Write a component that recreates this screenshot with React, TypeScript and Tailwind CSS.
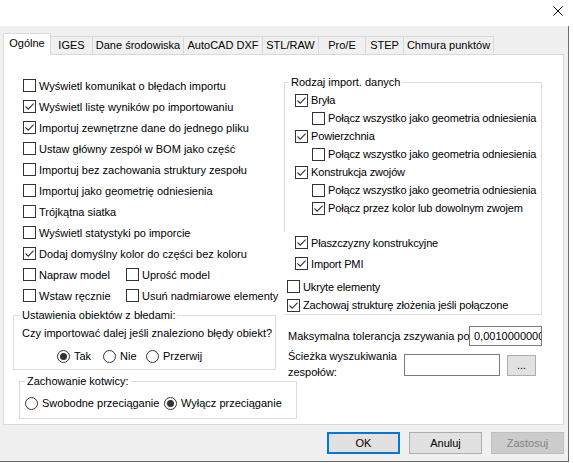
import React from "react";

const Check = ({ checked }: { checked?: boolean }) => (
  <svg width="13" height="13" viewBox="0 0 13 13" className="shrink-0">
    <rect x="0.5" y="0.5" width="12" height="12" fill="#fff" stroke="#333333" />
    {checked && (
      <path d="M2.5 6.5 L5.2 9.2 L10.6 3.6" fill="none" stroke="#333333" strokeWidth="1.1" />
    )}
  </svg>
);

const Radio = ({ checked }: { checked?: boolean }) => (
  <svg width="13" height="13" viewBox="0 0 13 13" className="shrink-0">
    <circle cx="6.5" cy="6.5" r="6" fill="#fff" stroke="#333333" />
    {checked && <circle cx="6.5" cy="6.5" r="3.5" fill="#333333" />}
  </svg>
);

const CheckItem = ({ label, checked, className = "" }: { label: string; checked?: boolean; className?: string }) => (
  <div className={"flex items-center gap-[3px] whitespace-nowrap " + className}>
    <Check checked={checked} />
    <span>{label}</span>
  </div>
);

const RadioItem = ({ label, checked, className = "" }: { label: string; checked?: boolean; className?: string }) => (
  <div className={"flex items-center gap-[4px] whitespace-nowrap " + className}>
    <Radio checked={checked} />
    <span>{label}</span>
  </div>
);

const tabs = [
  { label: "IGES", w: "w-[43px]" },
  { label: "Dane środowiska", w: "w-[92px]" },
  { label: "AutoCAD DXF", w: "w-[80px]" },
  { label: "STL/RAW", w: "w-[57px]" },
  { label: "Pro/E", w: "w-[48px]" },
  { label: "STEP", w: "w-[39px]" },
  { label: "Chmura punktów", w: "w-[91px]" },
];

export default function App() {
  return (
    <div className="w-[573px] h-[463px] bg-white overflow-hidden text-[11px] leading-[16px] text-black font-['Liberation_Sans',Arial,sans-serif]">
      {/* title bar */}
      <div className="h-[26px] bg-white flex justify-end items-start">
        <svg width="10" height="10" viewBox="0 0 10 10" className="mt-[6px] mr-[10px]">
          <path d="M0.5 0.5 L9.5 9.5 M9.5 0.5 L0.5 9.5" stroke="#000" strokeWidth="1" />
        </svg>
      </div>

      {/* body */}
      <div className="w-[569px] h-[436px] bg-[#f0f0f0] border-r border-b border-[#6d6d6d] pt-[7px]">
        {/* tabs */}
        <div className="flex items-end h-[21px] pl-[3px]">
          <div className="relative z-10 -mb-px h-[22px] w-[48px] bg-white border border-b-0 border-[#d9d9d9] flex items-center justify-center pb-[3px]">
            Ogólne
          </div>
          {tabs.map((t) => (
            <div
              key={t.label}
              className={"-ml-px h-[18px] bg-[#f0f0f0] border border-b-0 border-[#d9d9d9] flex items-center justify-center pb-[1px] whitespace-nowrap " + t.w}
            >
              {t.label}
            </div>
          ))}
        </div>

        {/* panel */}
        <div className="ml-[3px] w-[561px] h-[371px] bg-white border border-[#d9d9d9] flex">
          {/* left column */}
          <div className="w-[280px] shrink-0 pt-[20px]">
            <div className="pl-[19px]">
              <CheckItem className="h-[21px]" label="Wyświetl komunikat o błędach importu" />
              <CheckItem className="h-[21px]" label="Wyświetl listę wyników po importowaniu" checked />
              <CheckItem className="h-[21px]" label="Importuj zewnętrzne dane do jednego pliku" checked />
              <CheckItem className="h-[21px]" label="Ustaw główny zespół w BOM jako część" />
              <CheckItem className="h-[21px]" label="Importuj bez zachowania struktury zespołu" />
              <CheckItem className="h-[21px]" label="Importuj jako geometrię odniesienia" />
              <CheckItem className="h-[21px]" label="Trójkątna siatka" />
              <CheckItem className="h-[21px]" label="Wyświetl statystyki po imporcie" />
              <CheckItem className="h-[21px]" label="Dodaj domyślny kolor do części bez koloru" checked />
              <div className="flex h-[21px]">
                <CheckItem className="w-[103px]" label="Napraw model" />
                <CheckItem label="Uprość model" />
              </div>
              <div className="flex h-[21px]">
                <CheckItem className="w-[103px]" label="Wstaw ręcznie" />
                <CheckItem label="Usuń nadmiarowe elementy" />
              </div>
            </div>

            <fieldset className="ml-[9px] mt-[2px] w-[263px] border border-[#dcdcdc] pb-[5px]">
              <legend className="ml-[6px] px-[2px] leading-[14px]">Ustawienia obiektów z błedami:</legend>
              <div className="mt-[3px] h-[16px] pl-[8px] flex items-center whitespace-nowrap">
                Czy importować dalej jeśli znaleziono błędy obiekt?
              </div>
              <div className="mt-[7px] h-[16px] pl-[43px] flex">
                <RadioItem className="w-[46px]" label="Tak" checked />
                <RadioItem className="w-[43px]" label="Nie" />
                <RadioItem label="Przerwij" />
              </div>
            </fieldset>

            <fieldset className="ml-[15px] mt-[4px] w-[278px] border border-[#dcdcdc] pb-[7px]">
              <legend className="ml-[5px] px-[2px] leading-[14px]">Zachowanie kotwicy:</legend>
              <div className="mt-[7px] h-[16px] pl-[5px] flex">
                <RadioItem className="w-[139px]" label="Swobodne przeciąganie" />
                <RadioItem label="Wyłącz przeciąganie" checked />
              </div>
            </fieldset>
          </div>

          {/* right column */}
          <div className="flex-1 pt-[20px]">
            <fieldset className="w-[258px] border border-[#dcdcdc] tracking-[-0.15px]">
              <legend className="ml-[4px] px-[2px] leading-[14px] tracking-normal">Rodzaj import. danych</legend>
              <div className="pt-[2px]">
                <CheckItem className="h-[18px] pl-[10px]" label="Bryła" checked />
                <CheckItem className="h-[18px] pl-[27px]" label="Połącz wszystko jako geometria odniesienia" />
                <CheckItem className="h-[18px] pl-[10px]" label="Powierzchnia" checked />
                <CheckItem className="h-[18px] pl-[27px]" label="Połącz wszystko jako geometria odniesienia" />
                <CheckItem className="h-[18px] pl-[10px]" label="Konstrukcja zwojów" checked />
                <CheckItem className="h-[18px] pl-[27px]" label="Połącz wszystko jako geometria odniesienia" />
                <CheckItem className="h-[18px] pl-[27px]" label="Połącz przez kolor lub dowolnym zwojem" checked />
                <div className="mt-[15px] -ml-px bg-white">
                  <CheckItem className="h-[21px] pl-[11px]" label="Płaszczyzny konstrukcyjne" checked />
                  <CheckItem className="h-[21px] pl-[11px]" label="Import PMI" checked />
                  <CheckItem className="mt-[3px] h-[19px] pl-[3px]" label="Ukryte elementy" />
                  <CheckItem className="h-[18px] pl-[3px]" label="Zachowaj strukturę złożenia jeśli połączone" checked />
                </div>
              </div>
            </fieldset>

            <div className="mt-[11px] h-[20px] pl-[4px] flex items-center">
              <div className="w-[181px] overflow-hidden whitespace-nowrap">Maksymalna tolerancja zszywania powierzchni</div>
              <div className="w-[73px] h-[20px] border border-[#7a7a7a] bg-white pl-[4px] overflow-hidden whitespace-nowrap flex items-center">
                0,00100000000
              </div>
            </div>

            <div className="mt-[2px] pl-[4px] flex items-start">
              <div className="w-[116px] leading-[16px]">
                Ścieżka wyszukiwania
                <br />
                zespołów:
              </div>
              <div className="mt-[6px] w-[96px] h-[22px] border border-[#7a7a7a] bg-white" />
              <div className="mt-[7px] ml-[7px] w-[29px] h-[21px] border border-[#adadad] bg-[#e1e1e1] flex items-center justify-center pb-[2px]">
                ...
              </div>
            </div>
          </div>
        </div>

        {/* buttons */}
        <div className="mt-[7px] pr-[4px] flex justify-end gap-[9px]">
          <div className="w-[73px] h-[22px] border-2 border-[#0078d7] bg-[#e1e1e1] flex items-center justify-center">OK</div>
          <div className="w-[73px] h-[22px] border border-[#adadad] bg-[#e1e1e1] flex items-center justify-center">Anuluj</div>
          <div className="w-[73px] h-[22px] border border-[#bfbfbf] bg-[#cccccc] text-[#838383] flex items-center justify-center">Zastosuj</div>
        </div>
      </div>
    </div>
  );
}
